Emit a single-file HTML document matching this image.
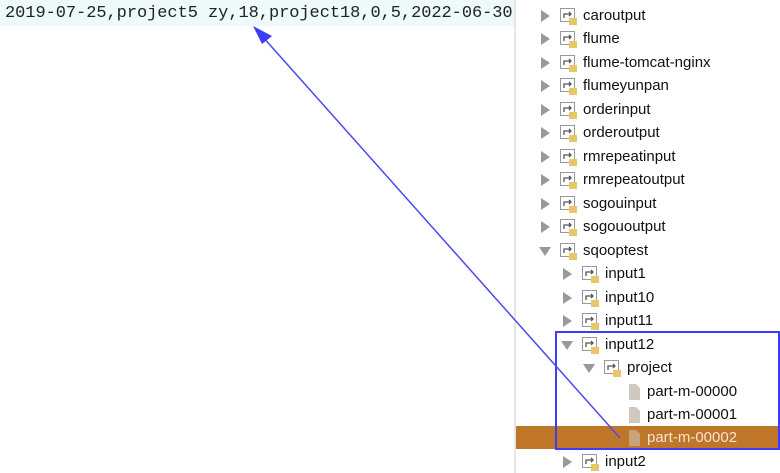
<!DOCTYPE html>
<html><head><style>
body{margin:0;width:780px;height:473px;overflow:hidden;background:#fff;position:relative;font-family:"Liberation Sans",sans-serif}
.ed{position:absolute;left:0;top:0;width:514px;height:26px;background:#eef9fa}
.code{position:absolute;left:5px;top:4px;font-family:"Liberation Mono",monospace;font-size:17px;letter-spacing:-0.05px;color:#222;white-space:pre}
.div{position:absolute;left:514px;top:0;width:2px;height:473px;background:#e6e6e6}
.row{position:absolute;height:23px;font-size:15px;color:#111;line-height:23px}
.tri{position:absolute;width:0;height:0}
.tr{border-left:9px solid #999;border-top:6px solid transparent;border-bottom:6px solid transparent;top:6px}
.td{border-top:9px solid #999;border-left:6px solid transparent;border-right:6px solid transparent;top:8px}
.ic{position:absolute;top:3px;width:18px;height:18px}
.t{position:absolute;top:0;white-space:nowrap}
.sel{position:absolute;left:516px;top:426px;width:264px;height:23px;background:#bf7628}
</style></head><body>
<div class="ed"></div>
<div class="code">2019-07-25,project5 zy,18,project18,0,5,2022-06-30</div>
<div class="div"></div>
<div class="sel"></div>
<div id="tree"></div>
<svg style="position:absolute;left:0;top:0" width="780" height="473">
<rect x="556" y="332" width="223" height="117" fill="none" stroke="#3c3cf5" stroke-width="2"/>
<line x1="620" y1="438" x2="262" y2="36" stroke="#4a4af0" stroke-width="1.5"/>
<polygon points="253,26 272,36 262,44" fill="#3c3cf5"/>
</svg>
<script>
var rows=[[0,'r','caroutput'],[0,'r','flume'],[0,'r','flume-tomcat-nginx'],[0,'r','flumeyunpan'],[0,'r','orderinput'],[0,'r','orderoutput'],[0,'r','rmrepeatinput'],[0,'r','rmrepeatoutput'],[0,'r','sogouinput'],[0,'r','sogououtput'],[0,'d','sqooptest'],[1,'r','input1'],[1,'r','input10'],[1,'r','input11'],[1,'d','input12'],[2,'d','project'],[3,'f','part-m-00000'],[3,'f','part-m-00001'],[3,'f','part-m-00002'],[1,'r','input2']];
var h='';
rows.forEach(function(r,i){
var y=Math.round(4+23.47*i),x=538+r[0]*22;
h+='<div class="row" style="left:0;top:'+y+'px;width:780px">';
if(r[1]=='f'){
h+='<svg class="ic" style="left:'+(x+21)+'px" viewBox="0 0 18 18"><path d="M4 1h7l4 4v12H4z" fill="'+(i==18?'#c9a37a':'#cfc9c0')+'"/></svg>';
h+='<span class="t" style="left:'+(x+43)+'px;color:'+(i==18?'#f4e4d0':'#111')+'">'+r[2]+'</span>';
}else{
h+='<div class="tri '+(r[1]=='r'?'tr':'td')+'" style="left:'+(x+(r[1]=='r'?3:1))+'px"></div>';
h+='<svg class="ic" style="left:'+(x+21)+'px" viewBox="0 0 18 18"><rect x="1.5" y="1.5" width="14" height="13" fill="#fff" stroke="#999"/><path d="M5 11V7h7M10 5l2 2-2 2" fill="none" stroke="#555" stroke-width="1.3"/><rect x="10" y="11" width="8" height="7" fill="#e8c76c"/></svg>';
h+='<span class="t" style="left:'+(x+45)+'px">'+r[2]+'</span>';
}
h+='</div>';});
document.getElementById('tree').innerHTML=h;
</script>
</body></html>
